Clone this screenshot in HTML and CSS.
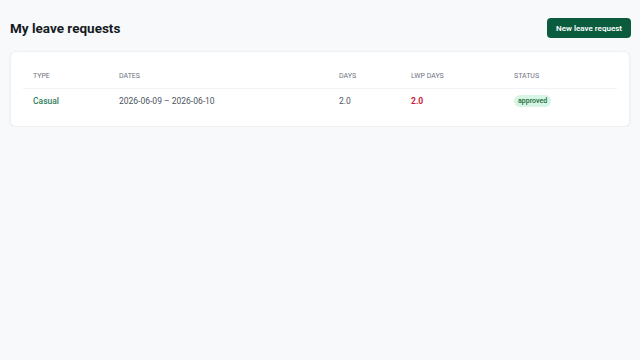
FILE: index.html
```html
<!doctype html>
<html lang="en">

<head>
	<title>My leave requests</title>
	<meta charset="utf-8">
	<meta name="viewport" content="width=device-width, initial-scale=1.0">
	<link rel="stylesheet" href="styles.css">
</head>

<body>
	<div class="page">
		<header class="topbar">
			<h1>My leave requests</h1>
			<button class="primary">New leave request</button>
		</header>
		<section class="card">
			<table class="requests">
				<thead>
					<tr>
						<th class="col-type">Type</th>
						<th class="col-dates">Dates</th>
						<th class="col-days">Days</th>
						<th class="col-lwp">LWP days</th>
						<th>Status</th>
					</tr>
				</thead>
				<tbody>
					<tr>
						<td class="type">Casual</td>
						<td>2026-06-09 &ndash; 2026-06-10</td>
						<td>2.0</td>
						<td class="lwp">2.0</td>
						<td><span class="badge">approved</span></td>
					</tr>
				</tbody>
			</table>
		</section>
	</div>
</body>

</html>
```

FILE: styles.css
```css
html
{
	margin: 0;
	padding: 0;
}

body
{
	margin: 0;
	padding: 0;
	background: #f7f9fb;
	color: #111827;
	font-family: "Roboto", "Liberation Sans", sans-serif;
}

.page
{
	padding: 18px 9px 0 10px;
}

.topbar
{
	display: flex;
	align-items: center;
	justify-content: space-between;
	height: 20px;
}

h1
{
	margin: 0;
	font-size: 13.5px;
	font-weight: 700;
	color: #161b22;
}

button.primary
{
	height: 20px;
	padding: 0 9px;
	border: none;
	border-radius: 4px;
	background-color: #0b5c3e;
	color: #ffffff;
	font-family: inherit;
	font-size: 8px;
	font-weight: 600;
}

.card
{
	margin-top: 13px;
	margin-right: 1px;
	padding: 12px 12px 13px 12px;
	background: #ffffff;
	border-radius: 6px;
	box-shadow: 0 1px 3px rgba(15, 23, 42, 0.06);
	border: 1px solid #eef1f4;
}

table.requests
{
	width: 100%;
	border-collapse: collapse;
}

.requests th
{
	padding: 0 10px;
	height: 24px;
	text-align: left;
	font-size: 7px;
	font-weight: 400;
	color: #6b7280;
	text-transform: uppercase;
	border-bottom: 1px solid #f0f2f5;
}

.requests td
{
	padding: 0 10px;
	height: 24px;
	font-size: 8.5px;
	color: #4b5563;
}

.col-type
{
	width: 66px;
}

.col-dates
{
	width: 200px;
}

.col-days
{
	width: 52px;
}

.col-lwp
{
	width: 83px;
}

.requests td.type
{
	color: #2f7d5a;
	font-weight: 500;
}

.requests td.lwp
{
	color: #c8203c;
	font-weight: 700;
}

.badge
{
	display: inline-block;
	padding: 2px 4px;
	border-radius: 8px;
	background: #d6f5e5;
	color: #166534;
	font-size: 7px;
	font-weight: 500;
}
```
